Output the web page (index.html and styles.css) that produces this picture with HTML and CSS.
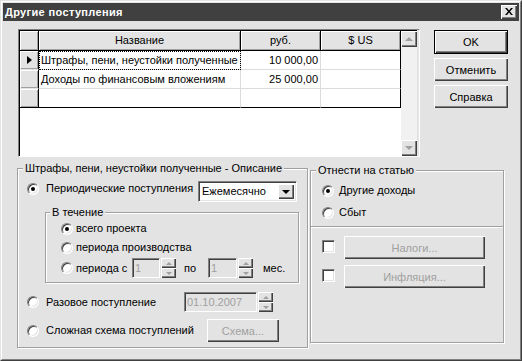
FILE: index.html
```html
<!DOCTYPE html>
<html>
<head>
<meta charset="utf-8">
<link rel="stylesheet" href="styles.css">
</head>
<body>
<div class="window">
  <div class="frame">
    <div class="titlebar">
      <span class="title">Другие поступления</span>
      <span class="close"><svg width="8" height="7" viewBox="0 0 8 7"><path d="M0 0h2l2 2.4L6 0h2L5 3.5 8 7H6L4 4.6 2 7H0l3-3.5z" fill="#000"/></svg></span>
    </div>
    <div class="content">
      <div class="top">
        <div class="grid">
          <div class="table">
            <div class="hc ind"></div>
            <div class="hc">Название</div>
            <div class="hc">руб.</div>
            <div class="hc lastcol">$ US</div>

            <div class="ic"><span class="pointer"></span></div>
            <div class="dc focus">Штрафы, пени, неустойки полученные</div>
            <div class="dc num">10 000,00</div>
            <div class="dc lastcol"></div>

            <div class="ic"></div>
            <div class="dc">Доходы по финансовым вложениям</div>
            <div class="dc num">25 000,00</div>
            <div class="dc lastcol"></div>

            <div class="ic lastrow"></div>
            <div class="dc lastrow"></div>
            <div class="dc lastrow"></div>
            <div class="dc lastrow lastcol"></div>
          </div>
          <div class="scroll">
            <div class="sbtn"><span class="tri-up-dis"></span></div>
            <div class="track"></div>
            <div class="sbtn"><span class="tri-down-dis"></span></div>
          </div>
        </div>
        <div class="buttons">
          <div class="btn default">OK</div>
          <div class="btn">Отменить</div>
          <div class="btn">Справка</div>
        </div>
      </div>

      <div class="bottom">
        <div class="group lgroup">
          <span class="legend">Штрафы, пени, неустойки полученные - Описание</span>
          <div class="row r-period">
            <span class="radio on"></span>
            <span class="lbl w-period">Периодические поступления</span>
            <div class="combo">
              <span class="combo-text">Ежемесячно</span>
              <span class="combo-btn"><span class="tri-down"></span></span>
            </div>
          </div>
          <div class="group inner">
            <span class="legend">В течение</span>
            <div class="irow ra"><span class="radio on"></span><span class="lbl">всего проекта</span></div>
            <div class="irow rb"><span class="radio"></span><span class="lbl">периода производства</span></div>
            <div class="irow rc">
              <span class="radio"></span>
              <span class="lbl w-from">периода с</span>
              <div class="edit w1">1</div>
              <div class="spin"><span class="sp"><span class="tri-up-dis sm"></span></span><span class="sp"><span class="tri-down-dis sm"></span></span></div>
              <span class="lbl w-to">по</span>
              <div class="edit w2">1</div>
              <div class="spin"><span class="sp"><span class="tri-up-dis sm"></span></span><span class="sp"><span class="tri-down-dis sm"></span></span></div>
              <span class="lbl mes">мес.</span>
            </div>
          </div>
          <div class="row r-once">
            <span class="radio"></span>
            <span class="lbl w-once">Разовое поступление</span>
            <div class="edit wdate">01.10.2007</div>
            <div class="spin"><span class="sp"><span class="tri-up-dis sm"></span></span><span class="sp"><span class="tri-down-dis sm"></span></span></div>
          </div>
          <div class="row r-complex">
            <span class="radio"></span>
            <span class="lbl w-complex">Сложная схема поступлений</span>
            <div class="btn dis schema">Схема...</div>
          </div>
        </div>

        <div class="group rgroup">
          <div class="rtop">
            <span class="legend">Отнести на статью</span>
            <div class="rrow r1"><span class="radio on"></span><span class="lbl">Другие доходы</span></div>
            <div class="rrow r2"><span class="radio"></span><span class="lbl">Сбыт</span></div>
          </div>
          <div class="divider"></div>
          <div class="crow c1"><span class="check"></span><div class="btn dis wide">Налоги...</div></div>
          <div class="crow c2"><span class="check"></span><div class="btn dis wide">Инфляция...</div></div>
        </div>
      </div>
    </div>
  </div>
</div>
</body>
</html>
```

FILE: styles.css
```css
* { box-sizing: border-box; }
html, body { margin: 0; padding: 0; }
body {
  width: 522px;
  height: 361px;
  overflow: hidden;
  background: #e3e3e3;
  font-family: "Liberation Sans", Arial, sans-serif;
  font-size: 11px;
  color: #000;
}
.window {
  width: 522px;
  height: 361px;
  border: 1px solid;
  border-color: #e3e3e3 #404040 #404040 #e3e3e3;
}
.frame {
  height: 100%;
  border: 1px solid;
  border-color: #fff #808080 #808080 #fff;
  padding: 1px;
}
.titlebar {
  height: 18px;
  background: #404040;
  display: flex;
  align-items: center;
  justify-content: space-between;
  padding: 0 2px 0 2px;
}
.title {
  color: #fff;
  font-weight: bold;
  font-size: 11px;
  letter-spacing: 0.35px;
}
.close {
  width: 16px;
  height: 14px;
  background: #e3e3e3;
  box-shadow: inset 1px 1px #fff, inset -1px -1px #404040, inset -2px -2px #808080;
  display: flex;
  align-items: center;
  justify-content: center;
  padding-bottom: 1px;
}
.content {
  padding: 8px 0 0 15px;
}
.top {
  display: flex;
  align-items: flex-start;
}
.grid {
  width: 402px;
  height: 128px;
  border: 1px solid;
  border-color: #808080 #fff #fff #808080;
  display: flex;
}
.table {
  width: 382px;
  height: 126px;
  background: #fff;
  border-top: 1px solid #000;
  border-left: 1px solid #000;
  display: grid;
  grid-template-columns: 19px 202px 80px 80px;
  grid-template-rows: 20px 19px 19px 19px;
  align-content: start;
}
.hc {
  background: #e3e3e3;
  border-right: 1px solid #000;
  border-bottom: 1px solid #000;
  text-align: center;
  line-height: 19px;
  box-shadow: inset 1px 1px #fff, inset -1px -1px #a0a0a0;
}
.ic {
  background: #e3e3e3;
  border-right: 1px solid #000;
  border-bottom: 1px solid #e3e3e3;
  box-shadow: inset 1px 1px #fff, inset -1px -1px #a0a0a0;
  display: flex;
  align-items: center;
  padding-left: 7px;
}
.dc {
  border-right: 1px solid #dcdcdc;
  border-bottom: 1px solid #dcdcdc;
  line-height: 18px;
  padding: 0 2px;
  white-space: nowrap;
  overflow: hidden;
}
.dc.num { text-align: right; }
.lastcol { border-right: 1px solid #000; }
.lastrow { border-bottom: 1px solid #000; }
.ic.lastrow { border-bottom: 1px solid #000; }
.focus {
  outline: 1px dotted #000;
  outline-offset: -1px;
}
.pointer {
  width: 0;
  height: 0;
  border-top: 4px solid transparent;
  border-bottom: 4px solid transparent;
  border-left: 5px solid #000;
}
.scroll {
  width: 16px;
  height: 126px;
  border-top: 1px solid #000;
  display: flex;
  flex-direction: column;
}
.sbtn {
  width: 16px;
  height: 16px;
  background: #e3e3e3;
  box-shadow: inset 1px 1px #fff, inset -1px -1px #404040, inset -2px -2px #808080;
  display: flex;
  align-items: center;
  justify-content: center;
}
.track {
  flex: 1;
  background: #f1f1f1;
}
.tri-up-dis, .tri-down-dis {
  width: 0;
  height: 0;
  border-left: 4px solid transparent;
  border-right: 4px solid transparent;
}
.tri-up-dis { border-bottom: 4px solid #a0a0a0; }
.tri-down-dis { border-top: 4px solid #a0a0a0; }
.tri-up-dis.sm, .tri-down-dis.sm {
  border-left-width: 3px;
  border-right-width: 3px;
}
.tri-up-dis.sm { border-bottom-width: 3px; }
.tri-down-dis.sm { border-top-width: 3px; }
.tri-down {
  width: 0;
  height: 0;
  border-left: 4px solid transparent;
  border-right: 4px solid transparent;
  border-top: 4px solid #000;
}
.buttons {
  margin-left: 14px;
  margin-top: 1px;
  display: flex;
  flex-direction: column;
  gap: 4px;
}
.btn {
  width: 74px;
  height: 23px;
  background: #e3e3e3;
  box-shadow: inset 1px 1px #fff, inset -1px -1px #404040, inset -2px -2px #808080;
  display: flex;
  align-items: center;
  justify-content: center;
}
.btn.default {
  border: 1px solid #000;
  height: 24px;
}
.btn.dis { color: #a0a0a0; }

/* bottom */
.bottom {
  display: flex;
  align-items: flex-start;
  margin-top: 11px;
  margin-left: -1px;
}
.group {
  border: 1px solid #a0a0a0;
  box-shadow: 1px 1px 0 #fff, inset 1px 1px 0 #fff;
  display: flex;
  flex-direction: column;
}
.legend {
  align-self: flex-start;
  height: 13px;
  line-height: 13px;
  margin: -7px 0 0 5px;
  padding: 0 2px;
  background: #e3e3e3;
  white-space: nowrap;
}
.lgroup {
  width: 291px;
  height: 180px;
}
.row {
  display: flex;
  align-items: flex-start;
  padding-left: 9px;
}
.lbl {
  line-height: 13px;
  white-space: nowrap;
}
.radio {
  flex: none;
  width: 12px;
  height: 12px;
  border-radius: 50%;
  border: 1px solid;
  border-color: #808080 #fff #fff #808080;
  background: #fff;
  box-shadow: inset 1px 1px #404040, inset -1px -1px #e3e3e3;
}
.radio.on::after {
  content: "";
  display: block;
  width: 4px;
  height: 4px;
  margin: 3px;
  border-radius: 50%;
  background: #000;
}
.check {
  flex: none;
  width: 13px;
  height: 13px;
  border: 1px solid;
  border-color: #808080 #fff #fff #808080;
  background: #fff;
  box-shadow: inset 1px 1px #404040, inset -1px -1px #e3e3e3;
}
.r-period { margin-top: 6px; }
.r-period .radio { margin-top: 2px; }
.r-period .lbl { margin: 1px 0 0 7px; width: 152px; }
.combo {
  width: 99px;
  height: 21px;
  background: #fff;
  border: 1px solid;
  border-color: #808080 #fff #fff #808080;
  box-shadow: inset 1px 1px #404040, inset -1px -1px #e3e3e3;
  display: flex;
  align-items: center;
  padding: 2px;
}
.combo-text {
  flex: 1;
  padding-left: 1px;
  line-height: 15px;
}
.combo-btn {
  width: 16px;
  height: 15px;
  background: #e3e3e3;
  box-shadow: inset 1px 1px #fff, inset -1px -1px #404040, inset -2px -2px #808080;
  display: flex;
  align-items: center;
  justify-content: center;
}
.inner {
  width: 254px;
  height: 71px;
  margin: 10px 0 0 27px;
}
.inner .legend { margin-left: 4px; }
.irow {
  display: flex;
  align-items: center;
  padding-left: 15px;
}
.irow .lbl { margin-left: 3px; }
.ra { height: 19px; }
.rb { height: 19px; }
.rc { height: 20px; margin-top: 1px; }
.rc .w-from { width: 56px; }
.edit {
  height: 20px;
  background: #e3e3e3;
  color: #a0a0a0;
  border: 1px solid;
  border-color: #808080 #fff #fff #808080;
  box-shadow: inset 1px 1px #404040, inset -1px -1px #e3e3e3;
  padding: 0 2px;
  line-height: 18px;
  white-space: nowrap;
}
.w1 { width: 28px; }
.w2 { width: 29px; }
.wdate { width: 73px; }
.spin {
  width: 15px;
  height: 20px;
  margin-left: 1px;
  display: flex;
  flex-direction: column;
}
.sp {
  flex: 1;
  background: #e3e3e3;
  box-shadow: inset 1px 1px #fff, inset -1px -1px #404040, inset -2px -2px #808080;
  display: flex;
  align-items: center;
  justify-content: center;
}
.rc .w-to { margin-left: 8px; width: 24px; }
.rc .mes { margin-left: 10px; }
.r-once { margin-top: 9px; align-items: center; }
.r-once .lbl { margin-left: 7px; width: 138px; }
.r-complex { margin-top: 7px; align-items: center; }
.r-complex .lbl { margin-left: 7px; width: 161px; }
.schema { width: 72px; }

.rgroup {
  width: 194px;
  height: 173px;
  margin-left: 2px;
  margin-top: 2px;
}
.rtop {
  height: 55px;
  display: flex;
  flex-direction: column;
}
.rrow {
  display: flex;
  align-items: center;
  height: 19px;
  padding-left: 11px;
}
.rrow .lbl { margin-left: 5px; }
.r1 { margin-top: 4px; }
.r2 { margin-top: 3px; }
.divider {
  height: 2px;
  border-top: 1px solid #a0a0a0;
  border-bottom: 1px solid #fff;
}
.crow {
  display: flex;
  align-items: flex-start;
  padding-left: 11px;
}
.crow .check { margin-top: 4px; }
.crow .btn { margin-left: 9px; }
.c1 { margin-top: 8px; }
.c2 { margin-top: 6px; }
.wide { width: 141px; }
```
